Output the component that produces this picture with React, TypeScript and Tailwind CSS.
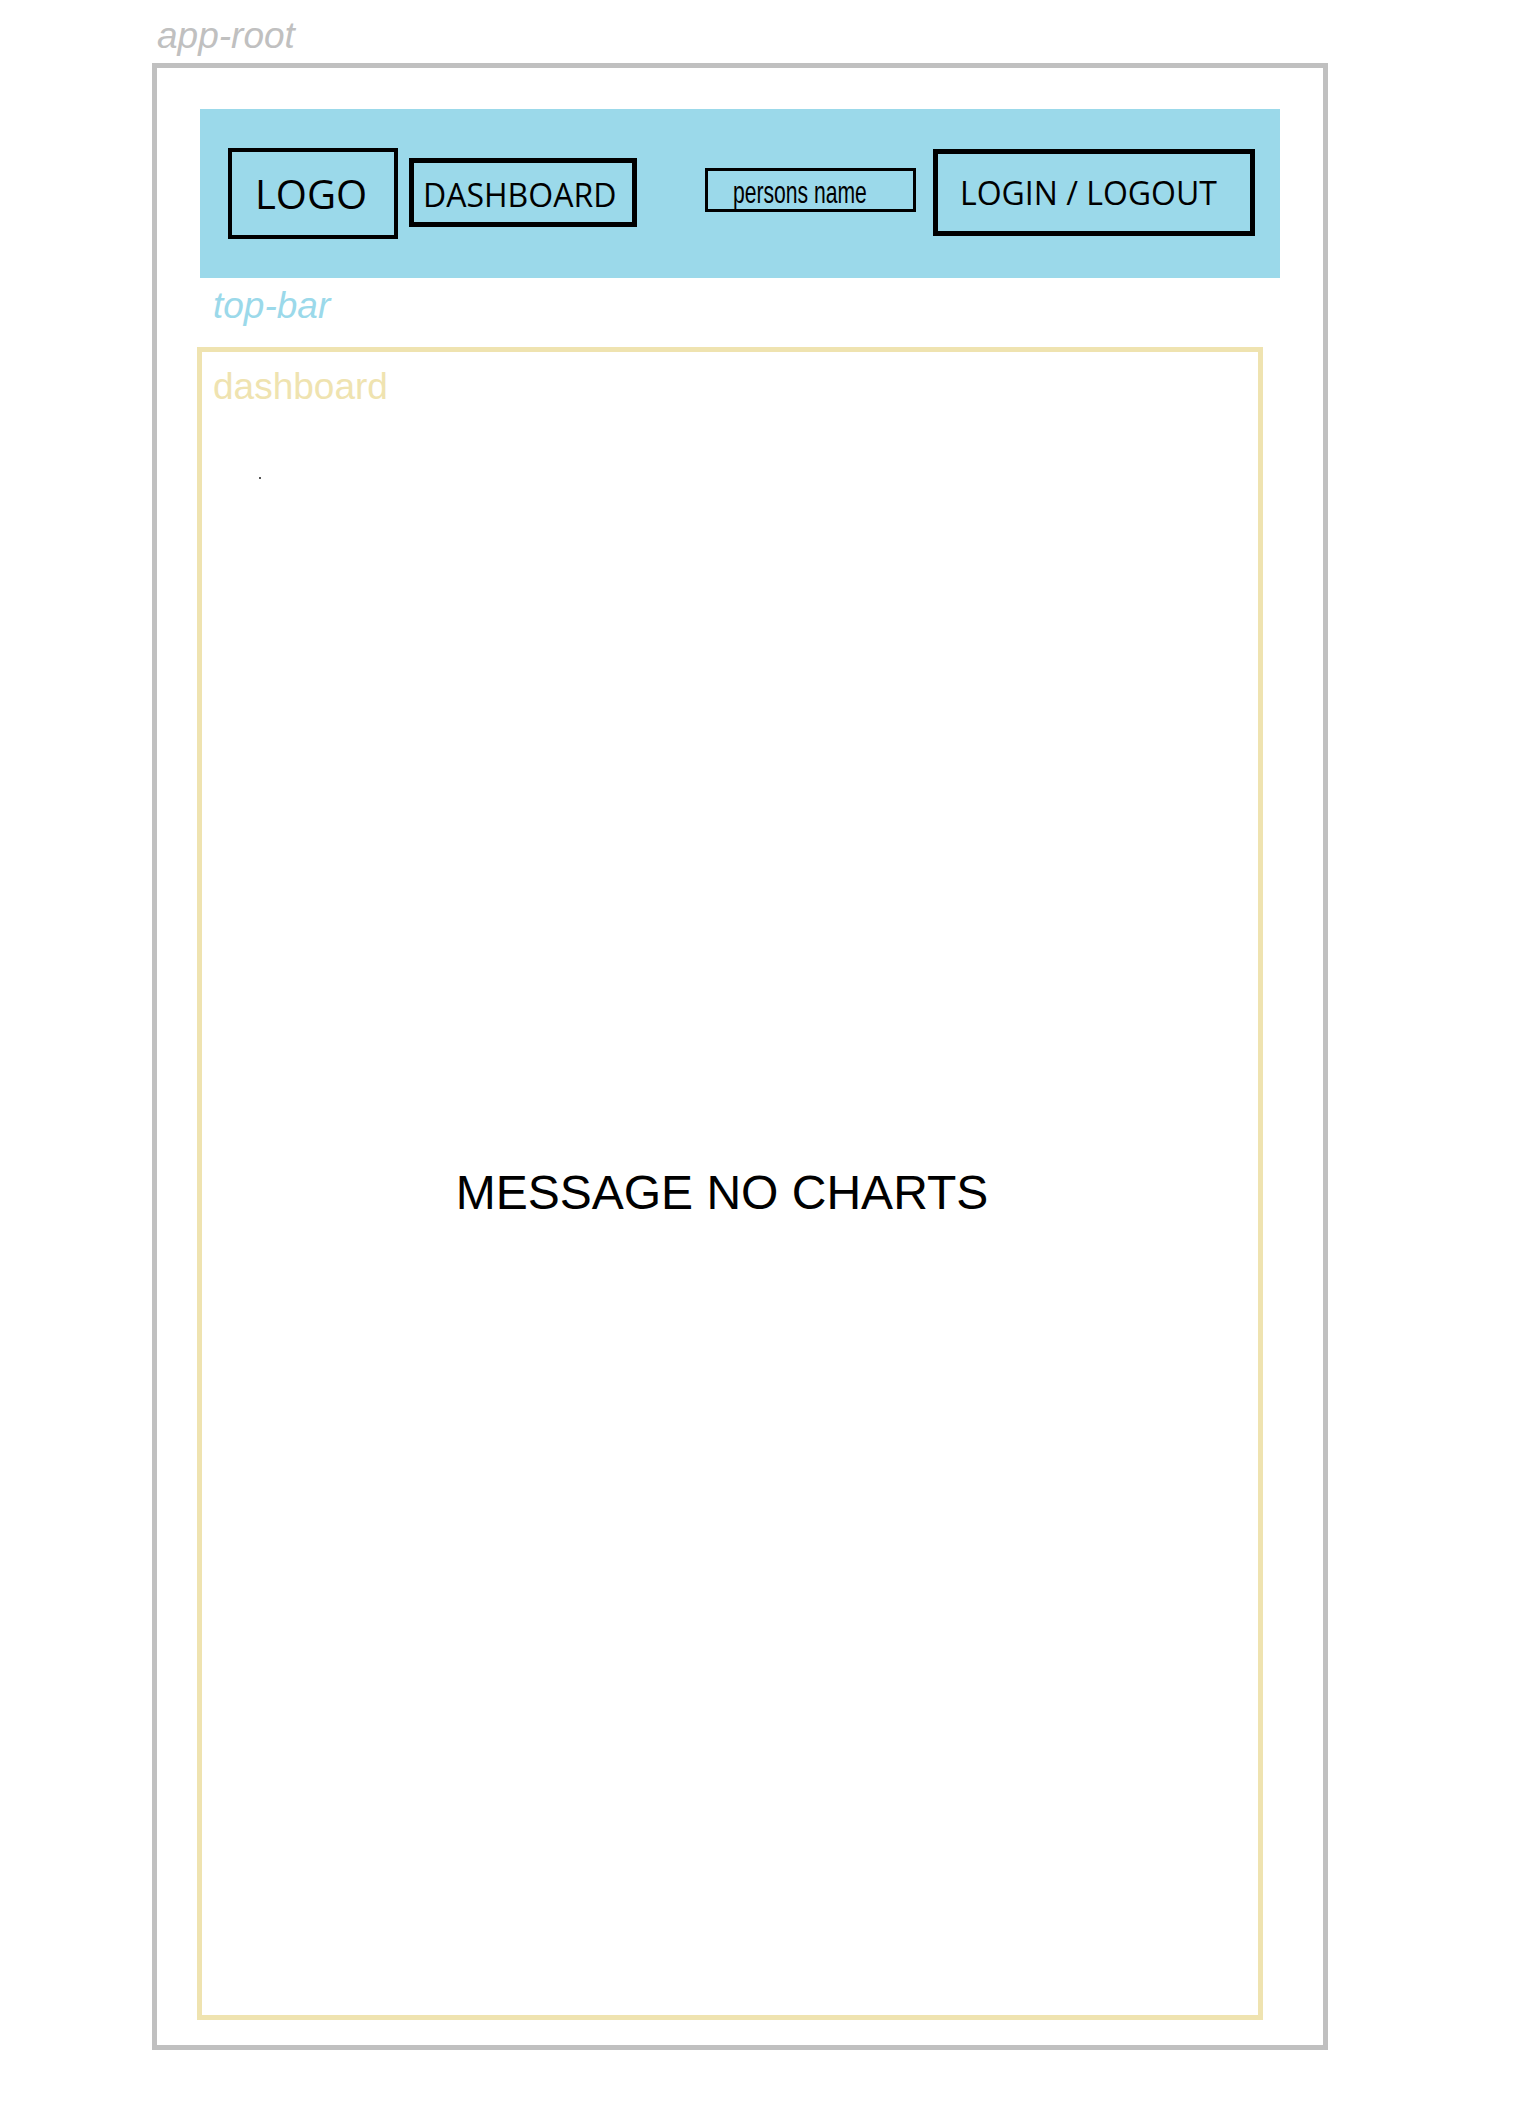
export default function App() {
  const label = "font-['Liberation_Sans',Arial,sans-serif] italic text-[37px] leading-none";
  const boxText = "font-['Open_Sans','Noto_Sans',sans-serif] text-black leading-none";

  return (
    <div className="min-h-[2128px] bg-white pl-[152px] pt-[17px]">
      <div className={`${label} text-[#c0c0c0] ml-[5px]`}>app-root</div>

      <div className="mt-[9px] w-[1176px] border-[5px] border-[#c0c0c0] flex flex-col">
        {/* top-bar */}
        <div className="mx-[43px] mt-[41px] h-[169px] bg-[#9bd9ea] flex items-center pl-[28px] pr-[25px]">
          <div className={`${boxText} w-[170px] h-[91px] border-[4px] border-black flex items-center justify-center pr-[4px] text-[40px]`}>
            LOGO
          </div>
          <div className={`${boxText} ml-[11px] w-[228px] h-[69px] border-[5px] border-black flex items-center pl-[9px] pt-[5px] text-[32px] mt-[-2px]`}>
            DASHBOARD
          </div>
          <div className="ml-[68px] w-[211px] h-[44px] border-[3px] border-black flex items-center pl-[25px] mt-[-7px] overflow-hidden">
            <span className="inline-block origin-left scale-x-[0.66] font-['Liberation_Sans',Arial,sans-serif] text-[32px] leading-none text-black whitespace-nowrap mt-[3px]">
              persons name
            </span>
          </div>
          <div className={`${boxText} ml-[17px] w-[322px] h-[87px] border-[5px] border-black flex items-center pl-[22px] text-[32px] mt-[-2px]`}>
            LOGIN / LOGOUT
          </div>
        </div>
        <div className={`${label} text-[#9bd9ea] ml-[56px] mt-[9px]`}>top-bar</div>

        {/* dashboard */}
        <div className="ml-[40px] mt-[23px] mb-[25px] w-[1066px] h-[1673px] border-[5px] border-[#efe3b0] flex flex-col">
          <div className="ml-[11px] mt-[16px] font-['Liberation_Sans',Arial,sans-serif] text-[37px] leading-none text-[#efe3b0]">
            dashboard
          </div>
          <div className="ml-[57px] mt-[72px] w-[2px] h-[2px] bg-[#555]" />
          <div className="mt-[690px] pr-[16px] text-center font-['Liberation_Sans',Arial,sans-serif] text-[48px] leading-none text-black">
            MESSAGE NO CHARTS
          </div>
        </div>
      </div>
    </div>
  );
}
